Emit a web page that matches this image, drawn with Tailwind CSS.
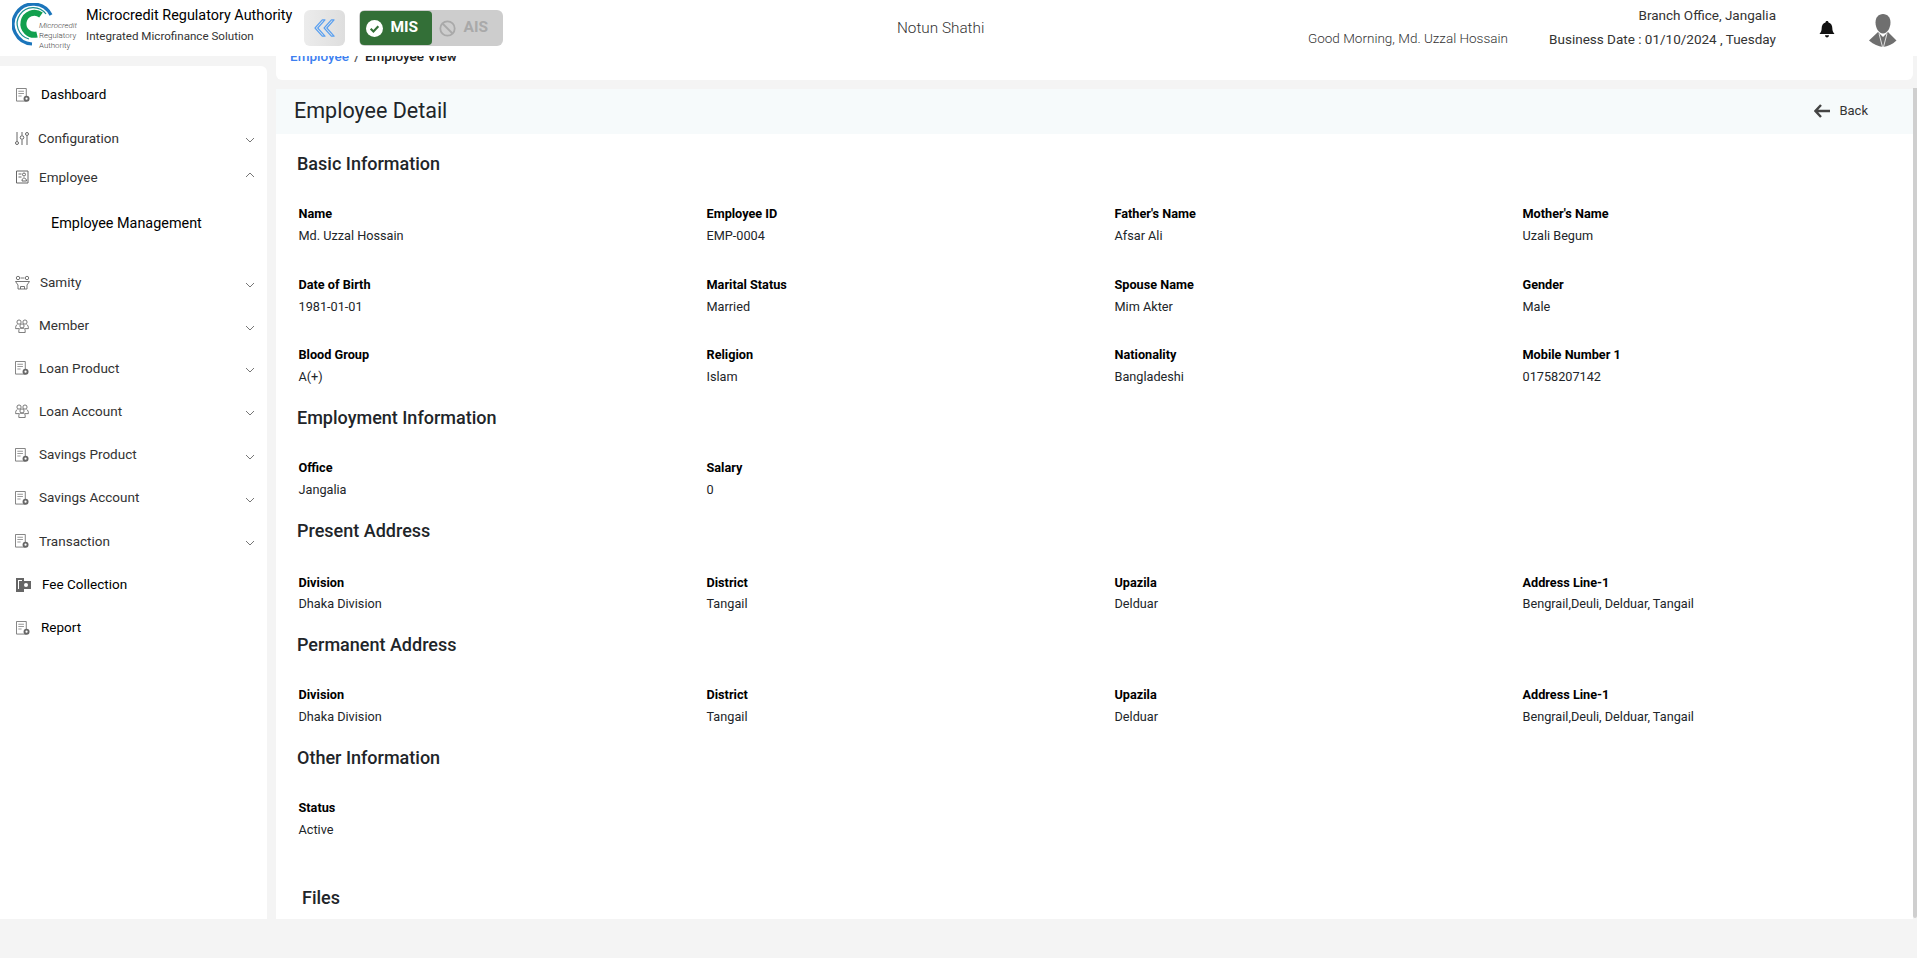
<!DOCTYPE html>
<html lang="en">
  <head>
    <meta charset="UTF-8" />
    <meta name="viewport" content="width=device-width, initial-scale=1.0" />
    <title>Employee Detail</title>
    <script src="https://cdn.jsdelivr.net/npm/@tailwindcss/browser@4"></script>
  </head>
  <body class="bg-[#f4f4f4] font-[Roboto,sans-serif] text-[#212529] h-[958px] overflow-hidden">
    <!-- Shared icons -->
    <svg class="hidden">
      <symbol id="doc" viewBox="0 0 15 15">
        <path d="M.5 .5h10.500v13.500H.5z" fill="#fff" stroke="#777" stroke-width="1" />
        <path d="M2.500 3.500h6M2.500 6h6M2.500 8.500h3.500" stroke="#999" stroke-width="1.100" fill="none" />
        <circle cx="11.300" cy="11.500" r="3.200" fill="#666" />
        <circle cx="11.300" cy="11.500" r="1.200" fill="#fff" />
      </symbol>
      <symbol id="people" viewBox="0 0 16 16" fill="none" stroke="#666" stroke-width="1">
        <circle cx="4.600" cy="3.500" r="2.400" />
        <circle cx="11.400" cy="3.500" r="2.400" />
        <circle cx="8" cy="8" r="2.400" />
        <path d="M2.800 6.200C1 7 .6 9 .7 11H4.600M13.200 6.200C15 7 15.400 9 15.300 11H11.400M4.400 15.500V12.800C4.400 11 6 10.400 8 10.400S11.600 11 11.600 12.800V15.500z" />
      </symbol>
      <symbol id="chev-down" viewBox="0 0 10 6" fill="none" stroke="#666" stroke-width="0.9">
        <path d="M1 1l4 4 4-4" />
      </symbol>
    </svg>

    <!-- Top bar -->
    <header class="h-[56px] bg-white flex items-center relative">
      <svg class="w-[66px] h-[50px] ml-[12px] shrink-0" viewBox="0 0 66 50" fill="none">
        <path d="M39 12A20 20 0 1 0 20 41" stroke="#1b75bb" stroke-width="3.200" />
        <path d="M34 11A16 16 0 1 0 17 36" stroke="#1b8f8f" stroke-width="1.200" />
        <path d="M29 12A11 11 0 1 0 25 31.500" stroke="#12a04e" stroke-width="6" />
        <text x="27" y="25" font-size="7.900" font-style="italic" font-weight="300" fill="#444" font-family="Roboto">Microcredit</text>
        <text x="27" y="35" font-size="7.900" font-weight="300" fill="#444" font-family="Roboto">Regulatory</text>
        <text x="27" y="45" font-size="7.900" font-weight="300" fill="#444" font-family="Roboto">Authority</text>
      </svg>
      <div class="ml-[8px] mb-[6.500px] w-[218px] shrink-0">
        <p class="text-[14.400px] leading-[20px] text-black">Microcredit Regulatory Authority</p>
        <p class="text-[11.600px] leading-[16px] mt-[2.500px] text-[#333]">Integrated Microfinance Solution</p>
      </div>
      <button class="w-[41px] h-[36px] rounded-md bg-gradient-to-r from-[#ececec] to-[#dedede] flex items-center justify-center shrink-0">
        <svg class="w-[24px] h-[20px]" viewBox="0 0 26 22" fill="none" stroke="#5aa0f0" stroke-width="1.300" stroke-linejoin="round">
          <path d="M10 2L2 11l8 9h3l-8-9 8-9z" />
          <path d="M20 2l-8 9 8 9h3l-8-9 8-9z" />
        </svg>
      </button>
      <div class="ml-[14px] w-[144px] h-[36px] rounded-md bg-[#cdcdcd] flex shrink-0 p-[1px]">
        <div class="w-[72px] rounded-[4px] bg-[#336f37] text-white flex items-center pl-[6px] gap-[7.500px] font-bold text-[15.500px]">
          <svg class="w-[17px] h-[17px]" viewBox="0 0 16 16">
            <circle cx="8" cy="8" r="8" fill="#fff" />
            <path d="M4.400 8.200l2.600 2.600 4.600-5" fill="none" stroke="#336f37" stroke-width="2" />
          </svg>
          MIS
        </div>
        <div class="flex-1 flex items-center pl-[7px] gap-[7.500px] font-bold text-[15.500px] text-[#a9a9a9]">
          <svg class="w-[17px] h-[17px]" viewBox="0 0 17 17" fill="none" stroke="#a9a9a9" stroke-width="1.800">
            <circle cx="8.500" cy="8.500" r="7.200" />
            <path d="M3.500 3.500l10 10" />
          </svg>
          AIS
        </div>
      </div>
      <p class="absolute left-[897px] top-[18px] text-[15.300px] leading-[20px] font-light text-[#333]">Notun Shathi</p>
      <p class="absolute left-[1308px] top-[28px] text-[13.500px] leading-[20px] font-light text-[#333]">Good Morning, Md. Uzzal Hossain</p>
      <div class="absolute right-[141px] top-[5px] text-right text-[13.500px] leading-[20px] text-[#333]">
        <p>Branch Office, Jangalia</p>
        <p class="mt-[3.500px]">Business Date : 01/10/2024 , Tuesday</p>
      </div>
      <svg class="absolute left-[1818px] top-[20px] w-[18px] h-[19px]" viewBox="0 0 18 19" fill="#111">
        <path d="M9 1c1 0 1.400.6 1.500 1.400C13 3 14.300 5.200 14.300 8c0 3 .9 4.500 2.200 6H1.500c1.300-1.500 2.200-3 2.200-6 0-2.800 1.300-5 3.800-5.600C7.600 1.600 8 1 9 1z" />
        <path d="M7 15.300h4c0 1.300-.9 2.200-2 2.200s-2-.9-2-2.200z" />
      </svg>
      <svg class="absolute left-[1868px] top-[14px] w-[29px] h-[33px]" viewBox="0 0 29 33" fill="#6f6f6f">
        <path d="M15 0c4.500 0 7.500 3.500 7.500 8.500 0 5-3 11-7.500 11s-7.500-6-7.500-11C7.500 3.500 10.500 0 15 0z" />
        <path d="M10 18L1 26.500C6 30.500 10 32.500 15 33c5-.5 9-2.500 13.500-6.500L20 18l-5 5z" />
        <path d="M11 19.500L14.500 33M19 19.500L15.500 33" stroke="#fff" stroke-width="0.800" fill="none" />
      </svg>
    </header>

    <div class="flex">
      <!-- Sidebar -->
      <aside class="w-[267px] h-[853px] mt-[10px] bg-white rounded-tr-md shrink-0 relative text-[13.500px] text-[#333]">
        <ul>
          <li class="h-[43px] mt-[7px] flex items-center pl-[16px] text-black">
            <svg class="w-[14px] h-[14px] mr-[11px]"><use href="#doc" /></svg>Dashboard
          </li>
          <li class="h-[44px] flex items-center pl-[15px]">
            <svg class="w-[14px] h-[15px] mr-[9px]" viewBox="0 0 14 15" fill="none" stroke="#666">
              <path d="M2 1v9M7 1v3M7 9v5M12 5v9" />
              <circle cx="2" cy="12" r="1.500" />
              <circle cx="7" cy="6.500" r="1.800" />
              <circle cx="12" cy="3" r="1.500" />
            </svg>Configuration
            <svg class="w-[10px] h-[6px] ml-auto mr-[12px] mt-[4px]"><use href="#chev-down" /></svg>
          </li>
          <li class="h-[34px] flex items-center pl-[16px]">
            <svg class="w-[13px] h-[14px] mr-[10px]" viewBox="0 0 13 14" fill="none" stroke="#666">
              <path d="M.5 1h11.500v12H.5z" />
              <circle cx="8" cy="4.500" r="1.500" />
              <path d="M2.500 4h3M2.500 7h3M6 11c0-2 1-3 2-3s2.500 1 2.500 3z" />
            </svg>Employee
            <svg class="w-[10px] h-[6px] ml-auto mr-[12px] mb-[4px] rotate-180"><use href="#chev-down" /></svg>
          </li>
          <li class="h-[67px] pl-[51px] pt-[20px] text-[14.400px] leading-[20px] text-black">Employee Management</li>
          <li class="h-[43px] flex items-center pl-[15px]">
            <svg class="w-[15px] h-[15px] mr-[10px]" viewBox="0 0 15 15" fill="none" stroke="#666" stroke-width="0.900">
              <circle cx="3" cy="3" r="1.700" />
              <circle cx="12" cy="3" r="1.700" />
              <path d="M.5 6.500h14L12 10v4H3v-4zM5.500 14v-2.500h4V14M5.500 3h4" />
            </svg>Samity
            <svg class="w-[10px] h-[6px] ml-auto mr-[12px] mt-[4px]"><use href="#chev-down" /></svg>
          </li>
          <li class="h-[43px] flex items-center pl-[15px]">
            <svg class="w-[14px] h-[14px] mr-[10px]"><use href="#people" /></svg>Member
            <svg class="w-[10px] h-[6px] ml-auto mr-[12px] mt-[4px]"><use href="#chev-down" /></svg>
          </li>
          <li class="h-[42px] flex items-center pl-[15px]">
            <svg class="w-[14px] h-[14px] mr-[10px]"><use href="#doc" /></svg>Loan Product
            <svg class="w-[10px] h-[6px] ml-auto mr-[12px] mt-[4px]"><use href="#chev-down" /></svg>
          </li>
          <li class="h-[44px] flex items-center pl-[15px]">
            <svg class="w-[14px] h-[14px] mr-[10px]"><use href="#people" /></svg>Loan Account
            <svg class="w-[10px] h-[6px] ml-auto mr-[12px] mt-[4px]"><use href="#chev-down" /></svg>
          </li>
          <li class="h-[43px] flex items-center pl-[15px]">
            <svg class="w-[14px] h-[14px] mr-[10px]"><use href="#doc" /></svg>Savings Product
            <svg class="w-[10px] h-[6px] ml-auto mr-[12px] mt-[4px]"><use href="#chev-down" /></svg>
          </li>
          <li class="h-[43px] flex items-center pl-[15px]">
            <svg class="w-[14px] h-[14px] mr-[10px]"><use href="#doc" /></svg>Savings Account
            <svg class="w-[10px] h-[6px] ml-auto mr-[12px] mt-[4px]"><use href="#chev-down" /></svg>
          </li>
          <li class="h-[44px] flex items-center pl-[15px]">
            <svg class="w-[14px] h-[14px] mr-[10px]"><use href="#doc" /></svg>Transaction
            <svg class="w-[10px] h-[6px] ml-auto mr-[12px] mt-[4px]"><use href="#chev-down" /></svg>
          </li>
          <li class="h-[43px] flex items-center pl-[16px] text-black">
            <svg class="w-[15px] h-[15px] mr-[11px]" viewBox="0 0 15 15" fill="#666">
              <path d="M0 1h8v14H0zM2 3v9h4V3z" />
              <path d="M3 4h12v8H3z" />
              <circle cx="10" cy="8" r="2" fill="#fff" />
            </svg>Fee Collection
          </li>
          <li class="h-[43px] flex items-center pl-[16px] text-black">
            <svg class="w-[14px] h-[14px] mr-[11px]"><use href="#doc" /></svg>Report
          </li>
        </ul>
      </aside>

      <!-- Main column -->
      <main class="flex-1 ml-[9px] min-w-0">
        <div class="h-[24px] mr-[4px] bg-white rounded-b-md overflow-hidden pl-[14px] text-[13.500px] leading-[16px]">
          <p class="font-medium text-[#222] -mt-[8px]"><span class="text-[#3d7ff0]">Employee</span> <span class="text-[#555] mx-[2px]">/</span> Employee View</p>
        </div>
        <div class="h-[830px] mt-[9px] flex rounded-br-md">
          <section class="flex-1 bg-white h-full overflow-hidden">
            <div class="h-[45px] bg-[#f6fafb] flex items-center justify-between pl-[18px] pr-[45px]">
              <h1 class="text-[21.500px] font-normal text-[#212529]">Employee Detail</h1>
              <div class="flex items-center gap-[9px] text-[13px] text-[#333] -mt-[1px]">
                <svg class="w-[16px] h-[14px] -mt-[1px]" viewBox="0 0 16 14" fill="none" stroke="#444" stroke-width="2.400">
                  <path d="M7 1L1.500 7 7 13M2 7h14" />
                </svg>
                Back
              </div>
            </div>

            <div class="pl-[21px]">
              <h2 class="text-[18px] font-medium leading-[24px] mt-[18px]">Basic Information</h2>
              <div class="grid grid-cols-[408px_408px_408px_1fr] gap-y-[28.500px] mt-[28px] pl-[1.500px] text-[12.700px] leading-[20px]">
                <div><p class="font-bold text-black">Name</p><p class="mt-[2px]">Md. Uzzal Hossain</p></div>
                <div><p class="font-bold text-black">Employee ID</p><p class="mt-[2px]">EMP-0004</p></div>
                <div><p class="font-bold text-black">Father's Name</p><p class="mt-[2px]">Afsar Ali</p></div>
                <div><p class="font-bold text-black">Mother's Name</p><p class="mt-[2px]">Uzali Begum</p></div>
                <div><p class="font-bold text-black">Date of Birth</p><p class="mt-[2px]">1981-01-01</p></div>
                <div><p class="font-bold text-black">Marital Status</p><p class="mt-[2px]">Married</p></div>
                <div><p class="font-bold text-black">Spouse Name</p><p class="mt-[2px]">Mim Akter</p></div>
                <div><p class="font-bold text-black">Gender</p><p class="mt-[2px]">Male</p></div>
                <div><p class="font-bold text-black">Blood Group</p><p class="mt-[2px]">A(+)</p></div>
                <div><p class="font-bold text-black">Religion</p><p class="mt-[2px]">Islam</p></div>
                <div><p class="font-bold text-black">Nationality</p><p class="mt-[2px]">Bangladeshi</p></div>
                <div><p class="font-bold text-black">Mobile Number 1</p><p class="mt-[2px]">01758207142</p></div>
              </div>

              <h2 class="text-[18px] font-medium leading-[24px] mt-[19px]">Employment Information</h2>
              <div class="grid grid-cols-[408px_408px_408px_1fr] mt-[28px] pl-[1.500px] text-[12.700px] leading-[20px]">
                <div><p class="font-bold text-black">Office</p><p class="mt-[2px]">Jangalia</p></div>
                <div><p class="font-bold text-black">Salary</p><p class="mt-[2px]">0</p></div>
              </div>

              <h2 class="text-[18px] font-medium leading-[24px] mt-[19px]">Present Address</h2>
              <div class="grid grid-cols-[408px_408px_408px_1fr] mt-[29.500px] pl-[1.500px] text-[12.700px] leading-[20px]">
                <div><p class="font-bold text-black">Division</p><p class="mt-[1px]">Dhaka Division</p></div>
                <div><p class="font-bold text-black">District</p><p class="mt-[1px]">Tangail</p></div>
                <div><p class="font-bold text-black">Upazila</p><p class="mt-[1px]">Delduar</p></div>
                <div><p class="font-bold text-black">Address Line-1</p><p class="mt-[1px]">Bengrail,Deuli, Delduar, Tangail</p></div>
              </div>

              <h2 class="text-[18px] font-medium leading-[24px] mt-[19px]">Permanent Address</h2>
              <div class="grid grid-cols-[408px_408px_408px_1fr] mt-[28.500px] pl-[1.500px] text-[12.700px] leading-[20px]">
                <div><p class="font-bold text-black">Division</p><p class="mt-[2px]">Dhaka Division</p></div>
                <div><p class="font-bold text-black">District</p><p class="mt-[2px]">Tangail</p></div>
                <div><p class="font-bold text-black">Upazila</p><p class="mt-[2px]">Delduar</p></div>
                <div><p class="font-bold text-black">Address Line-1</p><p class="mt-[2px]">Bengrail,Deuli, Delduar, Tangail</p></div>
              </div>

              <h2 class="text-[18px] font-medium leading-[24px] mt-[19px]">Other Information</h2>
              <div class="mt-[28px] pl-[1.500px] text-[12.700px] leading-[20px]">
                <p class="font-bold text-black">Status</p><p class="mt-[2px]">Active</p>
              </div>

              <h2 class="text-[18px] font-medium leading-[24px] mt-[46px] pl-[5px]">Files</h2>
            </div>
          </section>
          <div class="w-[4px] h-full bg-[#cfcfcf] rounded-b-sm -mt-[1px]"></div>
        </div>
      </main>
    </div>
  </body>
</html>
